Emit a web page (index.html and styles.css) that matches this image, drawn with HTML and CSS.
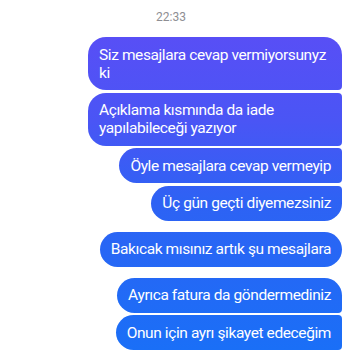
FILE: index.html
```html
<!DOCTYPE html>
<html>
<head>
    <title>Mesajlar</title>
    <link rel="stylesheet" href="styles.css">
</head>
<body>
    <div class="chat">
        <div class="time">22:33</div>

        <div class="group">
            <div class="msg first">Siz mesajlara cevap vermiyorsunyz ki</div>
            <div class="msg">Açıklama kısmında da iade yapılabileceği yazıyor</div>
            <div class="msg">Öyle mesajlara cevap vermeyip</div>
            <div class="msg last">Üç gün geçti diyemezsiniz</div>
        </div>

        <div class="group">
            <div class="msg first last">Bakıcak mısınız artık şu mesajlara</div>
        </div>

        <div class="group">
            <div class="msg first">Ayrıca fatura da göndermediniz</div>
            <div class="msg">Onun için ayrı şikayet edeceğim</div>
        </div>
    </div>
</body>
</html>
```

FILE: styles.css
```css
body { margin: 0; background: #fff; font-family: 'Roboto', 'Inter', sans-serif; }
.chat { padding: 9px 8px 0 0; display: flex; flex-direction: column; }
.time { text-align: center; font-size: 12px; color: #8e8e93; line-height: 16px; margin-bottom: 12px; }
.group { display: flex; flex-direction: column; align-items: flex-end; gap: 2.5px; margin-bottom: 11px; }
.msg {
    box-sizing: border-box;
    max-width: 254px;
    padding: 8.5px 11px;
    font-size: 15.5px;
    letter-spacing: -0.4px;
    line-height: 18px;
    color: #fff;
    border-radius: 18px 4px 4px 18px;
    background: linear-gradient(180deg, #5e4cf6 0px, #4a55f5 120px, #2e62f4 200px, #1a6ff7 350px);
    background-attachment: fixed;
}
.msg.first { border-top-right-radius: 18px; }
.msg.last { border-bottom-right-radius: 18px; }
```
